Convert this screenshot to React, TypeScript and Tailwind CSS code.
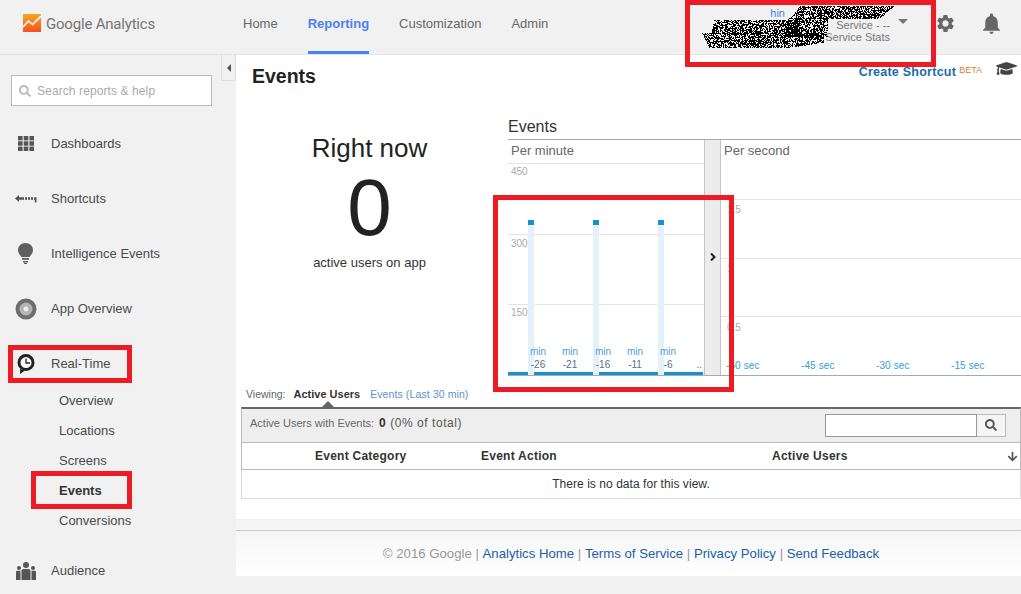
import { MdSettings, MdNotifications } from "react-icons/md";
import { FaGraduationCap, FaSearch, FaArrowDown } from "react-icons/fa";

const sans = { fontFamily: '"Liberation Sans", Arial, sans-serif' };

// scratched-out account name, built as 1px specks
function scribblePath() {
  let seed = 1337;
  const rnd = () => {
    seed = (seed * 16807) % 2147483647;
    return seed / 2147483647;
  };
  const blobs = [
    { y0: 6, y1: 19, left: (y: number) => 100 - (y - 6) * 0.8, right: (y: number) => 194 - (y - 6) * 1.2 },
    { y0: 18, y1: 37, left: (y: number) => 88 - (y - 18) * 0.2, right: (y: number) => 128 },
    { y0: 20, y1: 34, left: (y: number) => 14 - (y - 20) * 0.2, right: (y: number) => 100 },
    { y0: 33, y1: 48, left: (y: number) => 2 + (y - 33) * 0.5, right: (y: number) => (y < 42 ? 124 : 124 - (y - 42) * 6) },
  ];
  let d = "";
  for (const b of blobs) {
    for (let y = b.y0; y < b.y1; y++) {
      for (let x = Math.round(b.left(y)); x < b.right(y); x++) {
        if (rnd() < 0.62) d += `M${x} ${y}h1v1h-1z`;
      }
    }
  }
  return d;
}
const scribble = scribblePath();

function GaLogo() {
  return (
    <svg width="18" height="18" viewBox="0 0 18 18">
      <defs>
        <linearGradient id="ga" x1="0" y1="0" x2="0" y2="1">
          <stop offset="0" stopColor="#f9a825" />
          <stop offset="1" stopColor="#f4511e" />
        </linearGradient>
      </defs>
      <rect width="18" height="18" fill="url(#ga)" />
      <path d="M0 13 L5.5 7 L9.5 10.5 L18 2" fill="none" stroke="#fff" strokeWidth="1.6" />
    </svg>
  );
}

function GridIcon() {
  return (
    <svg width="16" height="15" viewBox="0 0 16 15" fill="#555">
      <rect x="0" y="0" width="4.6" height="4.4" />
      <rect x="5.7" y="0" width="4.6" height="4.4" />
      <rect x="11.4" y="0" width="4.6" height="4.4" />
      <rect x="0" y="5.3" width="4.6" height="4.4" />
      <rect x="5.7" y="5.3" width="4.6" height="4.4" />
      <rect x="11.4" y="5.3" width="4.6" height="4.4" />
      <rect x="0" y="10.6" width="4.6" height="4.4" />
      <rect x="5.7" y="10.6" width="4.6" height="4.4" />
      <rect x="11.4" y="10.6" width="4.6" height="4.4" />
    </svg>
  );
}

function ShortcutIcon() {
  return (
    <svg width="22" height="8" viewBox="0 0 22 8" fill="#555">
      <path d="M0 3.5 L4 0 V2.2 H9 V4.8 H4 V7 Z" />
      <rect x="10" y="2.2" width="2" height="2.6" />
      <rect x="13" y="2.2" width="2" height="2.6" />
      <rect x="16" y="2.2" width="2" height="2.6" />
      <path d="M19 2.2 H21.5 V7.5 H19.8 V4.8 H19 Z" />
    </svg>
  );
}

function BulbIcon() {
  return (
    <svg width="15" height="21" viewBox="0 0 15 21" fill="#5f5f5f">
      <path d="M7.5 0 C3.3 0 0 3 0 7 C0 10.2 2.2 12 3.4 14 H11.6 C12.8 12 15 10.2 15 7 C15 3 11.7 0 7.5 0 Z" />
      <rect x="4" y="15" width="7" height="1.8" />
      <rect x="5" y="18" width="5" height="1.4" />
      <rect x="6" y="19.8" width="3" height="1.2" />
    </svg>
  );
}

function DiscIcon() {
  return (
    <svg width="22" height="22" viewBox="0 0 22 22">
      <circle cx="11" cy="11" r="10.5" fill="#6e6e6e" />
      <circle cx="11" cy="11" r="6.5" fill="#b5b5b5" />
      <circle cx="11" cy="11" r="2.4" fill="#eeeeee" />
    </svg>
  );
}

function ClockIcon() {
  return (
    <svg width="18" height="20" viewBox="0 0 18 20">
      <path d="M3 15 L3 20 L8 16.5 Z" fill="#222" />
      <circle cx="9" cy="8.6" r="7" fill="#fff" stroke="#222" strokeWidth="3" />
      <path d="M9 4.5 V9 H13" fill="none" stroke="#222" strokeWidth="1.3" />
    </svg>
  );
}

function PeopleIcon() {
  return (
    <svg width="20" height="18" viewBox="0 0 20 18" fill="#555">
      <circle cx="10" cy="3" r="3" />
      <circle cx="3" cy="6" r="2" />
      <circle cx="17" cy="6" r="2" />
      <path d="M5.5 9 Q5.5 7 7.5 7 H12.5 Q14.5 7 14.5 9 V18 H5.5 Z" />
      <path d="M0 10 Q0 8.8 1.2 8.8 H4.5 V18 H0 Z" />
      <path d="M15.5 8.8 H18.8 Q20 8.8 20 10 V18 H15.5 Z" />
    </svg>
  );
}

function NavItem({ label, icon }: { label: string; icon: React.ReactNode }) {
  return (
    <div className="flex h-[55px] items-center">
      <div className="flex w-[51px] justify-center">{icon}</div>
      <span className="text-[13px] text-[#4a4a4a]">{label}</span>
    </div>
  );
}

function RedBox({ className }: { className: string }) {
  return <div className={`absolute border-[5px] border-[#ed1c24] ${className}`} />;
}

function PerMinute() {
  return (
    <div className="flex w-[196px] flex-col">
      <div className="h-[24px] border-b border-[#e4e4e4] pl-[3px] text-[13px] leading-[21px] text-[#666]">Per minute</div>
      <div className="relative flex-1">
        <div className="absolute inset-x-0 top-[70px] h-px bg-[#e4e4e4]" />
        <div className="absolute inset-x-0 top-[140px] h-px bg-[#e4e4e4]" />
        <span className="absolute left-[3px] top-[2px] text-[10px] leading-[11px] text-[#aaa]">450</span>
        <span className="absolute left-[3px] top-[74px] text-[10px] leading-[11px] text-[#aaa]">300</span>
        <span className="absolute left-[3px] top-[143px] text-[10px] leading-[11px] text-[#aaa]">150</span>
        <div className="absolute bottom-0 left-0 right-px h-[3px] bg-[#1392cf]" />
        {[20, 85, 150].map((left) => (
          <div
            key={left}
            className="absolute bottom-0 top-[56px] w-[6px] bg-[#e3f1f9]"
            style={{ left }}
          >
            <div className="h-[5px] bg-[#1392cf]" />
          </div>
        ))}
        {[
          { x: 30, t: "-26" },
          { x: 62, t: "-21" },
          { x: 95, t: "-16" },
          { x: 127, t: "-11" },
          { x: 160, t: "-6" },
        ].map((m) => (
          <div
            key={m.t}
            className="absolute bottom-[4px] flex w-[30px] -translate-x-1/2 flex-col items-center text-[10px] leading-[13px]"
            style={{ left: m.x }}
          >
            <span className="text-[#4f9fd8]">min</span>
            <span className="text-[#55708a]">{m.t}</span>
          </div>
        ))}
        <span className="absolute bottom-[4px] right-[2px] text-[10px] leading-[13px] text-[#55708a]">..</span>
      </div>
    </div>
  );
}

function PerSecond() {
  return (
    <div className="relative flex-1">
      <div className="pl-[3px] text-[13px] leading-[21px] text-[#666]">Per second</div>
      <div className="absolute inset-x-0 top-[59px] h-px bg-[#e4e4e4]" />
      <div className="absolute inset-x-0 top-[118px] h-px bg-[#e4e4e4]" />
      <div className="absolute inset-x-0 top-[176px] h-px bg-[#e4e4e4]" />
      <span className="absolute left-[6px] top-[64px] text-[10px] leading-[11px] text-[#aaa]">1.5</span>
      <span className="absolute left-[6px] top-[123px] text-[10px] leading-[11px] text-[#aaa]">1</span>
      <span className="absolute left-[6px] top-[182px] text-[10px] leading-[11px] text-[#aaa]">0.5</span>
      <div className="absolute bottom-[4px] left-[5px] flex text-[10px] leading-[11px] tracking-[0.1px] text-[#3a9bd8]">
        {["-60 sec", "-45 sec", "-30 sec", "-15 sec"].map((s) => (
          <span key={s} className="w-[75px]">{s}</span>
        ))}
      </div>
    </div>
  );
}

function Sidebar() {
  return (
    <aside className="relative w-[236px] shrink-0">
      <button className="absolute right-0 top-0 flex h-[26px] w-[15px] items-center justify-center border border-t-0 border-[#ddd] bg-[#f1f1f1]">
        <span className="h-0 w-0 border-y-[4px] border-r-[4px] border-y-transparent border-r-[#555]" />
      </button>
      <div className="ml-[11px] mt-[20px] flex h-[31px] w-[201px] items-center gap-[6px] border border-[#bbb] bg-white pl-[7px]">
        <FaSearch className="h-[12px] w-[12px] text-[#bbb]" />
        <span className="text-[12px] tracking-[0.1px] text-[#aaa]">Search reports &amp; help</span>
      </div>
      <div className="mt-[10px]">
        <NavItem label="Dashboards" icon={<GridIcon />} />
        <NavItem label="Shortcuts" icon={<ShortcutIcon />} />
        <NavItem label="Intelligence Events" icon={<BulbIcon />} />
        <NavItem label="App Overview" icon={<DiscIcon />} />
        <NavItem label="Real-Time" icon={<ClockIcon />} />
      </div>
      <ul className="-mt-[5px] pl-[59px] text-[13px] text-[#4a4a4a]">
        <li className="flex h-[30px] items-center">Overview</li>
        <li className="flex h-[30px] items-center">Locations</li>
        <li className="flex h-[30px] items-center">Screens</li>
        <li className="flex h-[30px] items-center font-bold text-[#333]">Events</li>
        <li className="flex h-[30px] items-center">Conversions</li>
      </ul>
      <div className="mt-[7px]">
        <NavItem label="Audience" icon={<PeopleIcon />} />
      </div>
    </aside>
  );
}

export default function App() {
  return (
    <div className="relative h-[594px] w-[1021px] overflow-hidden bg-[#f1f1f1]" style={sans}>
      <header className="flex h-[55px] items-center border-b border-[#e3e3e3]">
        <div className="flex w-[241px] shrink-0 items-center gap-[5px] pb-[8px] pl-[23px]">
          <GaLogo />
          <span className="mt-[3px] text-[15px] tracking-[-0.2px] text-[#757575]" style={{ fontFamily: "Roboto, sans-serif" }}>
            Google Analytics
          </span>
        </div>
        <nav className="flex h-full gap-[30px] text-[13px] text-[#666]">
          <a className="flex items-center pb-[6px] pl-[2px]">Home</a>
          <a className="flex items-center border-b-[3px] border-[#4285f4] pb-[3px] font-bold text-[#4a80f0]">Reporting</a>
          <a className="flex items-center pb-[6px]">Customization</a>
          <a className="flex items-center pb-[6px]">Admin</a>
        </nav>
        <div className="ml-auto flex items-center pb-[8px]">
          <div className="mt-[4px] flex flex-col items-end pr-[8px] text-[11px] leading-[12px] text-[#777]">
            <span className="mr-[105px] text-[#4a80f0]">hin</span>
            <span>Service - --</span>
            <span>Service Stats</span>
          </div>
          <span className="mt-[-3px] h-0 w-0 border-x-[5px] border-t-[5px] border-x-transparent border-t-[#777]" />
          <MdSettings className="ml-[27px] h-[21px] w-[21px] text-[#666]" />
          <MdNotifications className="ml-[23px] mr-[17px] h-[25px] w-[25px] text-[#666]" />
        </div>
      </header>

      <div className="flex">
        <Sidebar />
        <main className="flex-1">
          <div className="h-[464px] bg-white">
            <div className="flex h-[55px] items-start justify-between pl-[16px] pr-[4px]">
              <h1 className="mt-[9px] text-[19.5px] font-bold leading-[24px] text-[#222]">Events</h1>
              <div className="flex items-start">
                <span className="mt-[9px] text-[12.5px] font-bold leading-[16px] tracking-[0.25px] text-[#1a6fa8]">Create Shortcut</span>
                <span className="ml-[3px] mt-[9px] text-[9px] leading-[12px] text-[#e07b39]">BETA</span>
                <FaGraduationCap className="ml-[14px] mt-[3px] h-[21px] w-[21px] text-[#444]" />
              </div>
            </div>
            <div className="flex">
              <div className="flex w-[267px] flex-col items-center pt-[23px] text-[#222]">
                <div className="text-[26px] leading-[30px]">Right now</div>
                <div className="mt-[5px] text-[80px] leading-[80px]">0</div>
                <div className="mt-[5px] text-[13px] leading-[20px] text-[#333]">active users on app</div>
              </div>
              <div className="ml-[5px] flex-1">
                <div className="h-[29px] text-[16px] leading-[33px] text-[#333]">Events</div>
                <div className="flex h-[237px] border-y border-[#aaa]">
                  <PerMinute />
                  <div className="flex w-[17px] items-center justify-center border-x border-[#c4c4c4] bg-[#ececec] pb-[2px] text-[#222]">
                    <svg width="6" height="8" viewBox="0 0 6 8"><path d="M1 0.5 L4.5 4 L1 7.5" fill="none" stroke="#222" strokeWidth="2" /></svg>
                  </div>
                  <PerSecond />
                </div>
              </div>
            </div>
            <div className="ml-[5px]">
              <div className="relative flex h-[31px] items-center pl-[5px] pt-[6px] text-[10.5px]">
                <span className="text-[#666]">Viewing:</span>
                <span className="ml-[8px] text-[11px] font-bold text-[#333]">Active Users</span>
                <span className="ml-[10px] tracking-[0.1px] text-[#5b93c9]">Events (Last 30 min)</span>
                <span className="absolute bottom-0 left-[81px] h-0 w-0 border-x-[6px] border-b-[6px] border-x-transparent border-b-[#666]" />
              </div>
              <div className="flex h-[36px] items-center justify-between border-x border-b border-t-2 border-[#bbb] border-t-[#666] bg-[#eee] pb-[1px] pl-[8px] pr-[14px]">
                <div className="mb-[4px] flex items-baseline gap-[5px] text-[#555]">
                  <span className="text-[11px] text-[#666]">Active Users with Events:</span>
                  <span className="text-[12px] tracking-[0.55px]"><b className="text-[#333]">0</b> (0% of total)</span>
                </div>
                <div className="flex h-[23px]">
                  <div className="w-[152px] border border-[#999] bg-white" />
                  <div className="flex w-[29px] items-center justify-center border border-l-0 border-[#bbb] bg-[#f5f5f5]">
                    <FaSearch className="h-[12px] w-[12px] text-[#555]" />
                  </div>
                </div>
              </div>
              <div className="grid h-[27px] grid-cols-[239px_291px_1fr] items-center border-x border-b border-[#bbb] text-[12px] font-bold tracking-[0.25px] text-[#333]">
                <span className="pl-[73px]">Event Category</span>
                <span>Event Action</span>
                <div className="flex items-center justify-between pr-[2px]">
                  <span>Active Users</span>
                  <FaArrowDown className="h-[11px] w-[11px] text-[#555]" />
                </div>
              </div>
              <div className="flex h-[29px] items-center justify-center border-x border-b border-[#ddd] text-[12px] tracking-[0.05px] text-[#333]">
                There is no data for this view.
              </div>
            </div>
          </div>
          <footer>
            <div className="h-[12px] border-y border-t-[#eee] border-b-[#ccc] bg-[#f5f5f5]" />
            <div className="flex h-[45px] items-center justify-center bg-gradient-to-b from-[#f6f6f6] to-white pl-[5px] pt-[1px] text-[13.2px] text-[#999]">
              <span>© 2016 Google |&nbsp;</span>
              <a className="text-[#1a5fa8]">Analytics Home</a>
              <span>&nbsp;|&nbsp;</span>
              <a className="text-[#1a5fa8]">Terms of Service</a>
              <span>&nbsp;|&nbsp;</span>
              <a className="text-[#1a5fa8]">Privacy Policy</a>
              <span>&nbsp;|&nbsp;</span>
              <a className="text-[#1a5fa8]">Send Feedback</a>
            </div>
          </footer>
        </main>
      </div>

      <svg className="absolute left-[700px] top-0" width="200" height="50" shapeRendering="crispEdges">
        <path d={scribble} fill="#000" />
      </svg>
      <RedBox className="left-[685px] top-0 h-[67px] w-[251px]" />
      <RedBox className="left-[493px] top-[195px] h-[197px] w-[241px]" />
      <RedBox className="left-[8px] top-[345px] h-[38px] w-[124px]" />
      <RedBox className="left-[31px] top-[471px] h-[38px] w-[101px]" />
    </div>
  );
}
